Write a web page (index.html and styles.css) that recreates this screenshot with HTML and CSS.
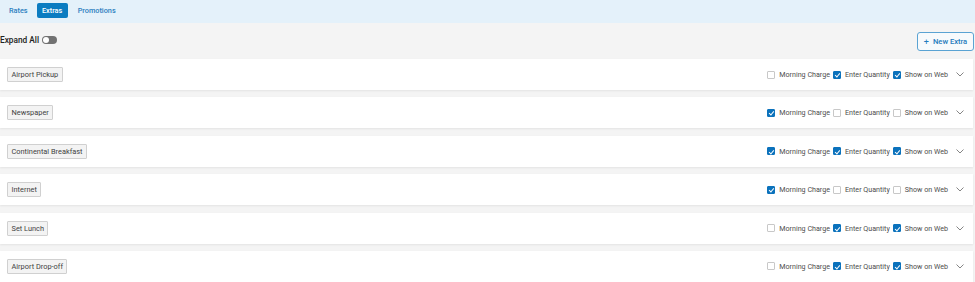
FILE: index.html
```html
<!DOCTYPE html>
<html>
<head>
<meta charset="utf-8">
<link rel="stylesheet" href="styles.css">
</head>
<body>
<nav class="tabs">
  <a class="tab">Rates</a>
  <a class="tab active">Extras</a>
  <a class="tab">Promotions</a>
</nav>
<main class="main">
  <div class="toolbar">
    <div class="expand">
      <span class="expand-label">Expand All</span>
      <span class="toggle"><span class="knob"></span></span>
    </div>
    <button class="new-btn"><span class="plus">+</span>New Extra</button>
  </div>
  <div class="list">
    <div class="card">
      <span class="chip">Airport Pickup</span>
      <div class="opts">
        <span class="cb"></span><span class="lbl">Morning Charge</span>
        <span class="cb on"></span><span class="lbl">Enter Quantity</span>
        <span class="cb on"></span><span class="lbl">Show on Web</span>
        <svg class="chev" viewBox="0 0 8 5"><polyline points="0.5,0.5 4,4 7.5,0.5"/></svg>
      </div>
    </div>
    <div class="card">
      <span class="chip">Newspaper</span>
      <div class="opts">
        <span class="cb on"></span><span class="lbl">Morning Charge</span>
        <span class="cb"></span><span class="lbl">Enter Quantity</span>
        <span class="cb"></span><span class="lbl">Show on Web</span>
        <svg class="chev" viewBox="0 0 8 5"><polyline points="0.5,0.5 4,4 7.5,0.5"/></svg>
      </div>
    </div>
    <div class="card">
      <span class="chip">Continental Breakfast</span>
      <div class="opts">
        <span class="cb on"></span><span class="lbl">Morning Charge</span>
        <span class="cb on"></span><span class="lbl">Enter Quantity</span>
        <span class="cb on"></span><span class="lbl">Show on Web</span>
        <svg class="chev" viewBox="0 0 8 5"><polyline points="0.5,0.5 4,4 7.5,0.5"/></svg>
      </div>
    </div>
    <div class="card">
      <span class="chip">Internet</span>
      <div class="opts">
        <span class="cb on"></span><span class="lbl">Morning Charge</span>
        <span class="cb"></span><span class="lbl">Enter Quantity</span>
        <span class="cb"></span><span class="lbl">Show on Web</span>
        <svg class="chev" viewBox="0 0 8 5"><polyline points="0.5,0.5 4,4 7.5,0.5"/></svg>
      </div>
    </div>
    <div class="card">
      <span class="chip">Set Lunch</span>
      <div class="opts">
        <span class="cb"></span><span class="lbl">Morning Charge</span>
        <span class="cb on"></span><span class="lbl">Enter Quantity</span>
        <span class="cb on"></span><span class="lbl">Show on Web</span>
        <svg class="chev" viewBox="0 0 8 5"><polyline points="0.5,0.5 4,4 7.5,0.5"/></svg>
      </div>
    </div>
    <div class="card">
      <span class="chip">Airport Drop-off</span>
      <div class="opts">
        <span class="cb"></span><span class="lbl">Morning Charge</span>
        <span class="cb on"></span><span class="lbl">Enter Quantity</span>
        <span class="cb on"></span><span class="lbl">Show on Web</span>
        <svg class="chev" viewBox="0 0 8 5"><polyline points="0.5,0.5 4,4 7.5,0.5"/></svg>
      </div>
    </div>
  </div>
</main>
</body>
</html>
```
FILE: styles.css
```css
* { box-sizing: border-box; }
html, body { margin: 0; padding: 0; }
body {
  font-family: Roboto, "Liberation Sans", sans-serif;
  background: #f4f4f4;
  color: #333;
  width: 975px;
  overflow: hidden;
}
.tabs {
  height: 23px;
  background: #e4f1fa;
  display: flex;
  align-items: flex-start;
  padding: 3px 0 0 9px;
}
.tab {
  font-size: 7.3px;
  font-weight: 500;
  color: #2c7fbf;
  height: 15px;
  line-height: 15px;
  border-radius: 2px;
}
.tab.active {
  background: #0b7cc1;
  color: #fff;
  width: 31px;
  text-align: center;
  margin: 0 10px 0 9px;
}
.toolbar {
  display: flex;
  justify-content: space-between;
  align-items: flex-start;
  height: 35px;
  padding-top: 9px;
  padding-right: 1px;
}
.expand {
  display: flex;
  align-items: center;
  gap: 3px;
  margin-top: 3px;
}
.expand-label {
  font-size: 8.3px;
  font-weight: 500;
  color: #222;
  line-height: 10px;
}
.toggle {
  width: 15px;
  height: 8px;
  border-radius: 4px;
  background: #727272;
  display: flex;
  align-items: center;
  padding: 0 1px;
}
.knob {
  width: 6px;
  height: 6px;
  border-radius: 50%;
  background: #fff;
}
.new-btn {
  font-family: inherit;
  font-size: 7.6px;
  font-weight: 500;
  color: #1f7bbd;
  background: #f7fafc;
  border: 1px solid #5aa3d3;
  border-radius: 3px;
  height: 19px;
  width: 57px;
  padding: 0;
  display: flex;
  align-items: center;
  justify-content: center;
  gap: 4px;
}
.plus { font-size: 9px; font-weight: 400; }
.list {
  display: flex;
  flex-direction: column;
  gap: 7.4px;
  padding-top: 1px;
  width: 973px;
}
.card {
  height: 31px;
  background: #fff;
  box-shadow: 0 1px 2px rgba(0,0,0,0.07);
  display: flex;
  align-items: center;
  justify-content: space-between;
  padding: 0 9px 0 7px;
}
.chip {
  font-size: 7.4px;
  color: #3f3f3f;
  background: #f3f3f3;
  border: 1px solid #d0d0d0;
  border-radius: 1px;
  height: 15px;
  line-height: 13px;
  padding: 0 3.5px;
}
.opts {
  display: flex;
  align-items: center;
  font-size: 7.15px;
  color: #4d4d4d;
}
.cb {
  width: 8px;
  height: 8px;
  border: 1px solid #c8c8c8;
  border-radius: 1px;
  background: #fff;
  margin-right: 4px;
  position: relative;
}
.cb.on {
  background: #0b72bc;
  border-color: #0b72bc;
}
.cb.on::after {
  content: "";
  position: absolute;
  left: 2px;
  top: 0.5px;
  width: 1.5px;
  height: 4px;
  border: solid #fff;
  border-width: 0 1px 1px 0;
  transform: rotate(40deg);
}
.lbl { margin-right: 3px; }
.chev {
  width: 8px;
  height: 5px;
  margin-left: 5px;
  fill: none;
  stroke: #777;
  stroke-width: 0.9;
}
```
